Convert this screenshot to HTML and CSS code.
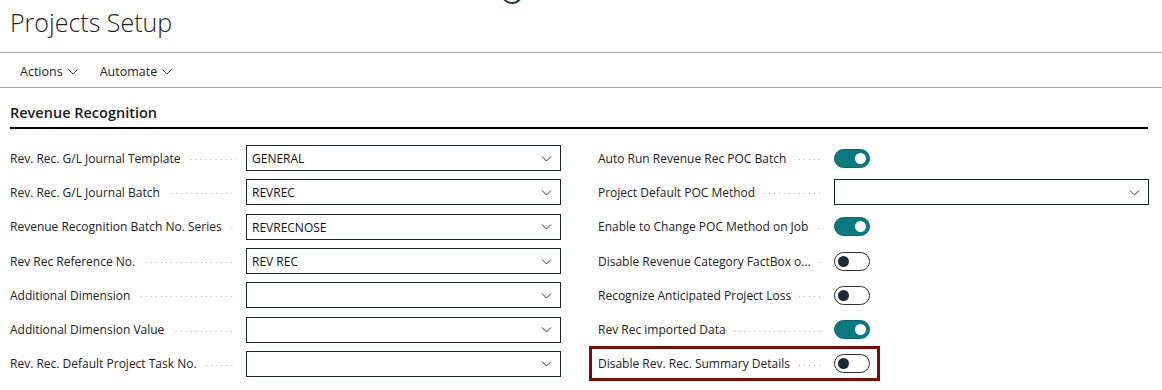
FILE: index.html
```html
<!DOCTYPE html>
<html lang="en">
<head>
  <meta charset="UTF-8" />
  <title>Projects Setup</title>
  <link rel="stylesheet" href="styles.css">
</head>
<body>

  <span class="top-dot"></span>

  <h1 class="page-title">Projects Setup</h1>

  <!-- Barra de acciones -->
  <nav class="action-bar">
    <button class="action-btn">Actions <svg viewBox="0 0 10 6"><path d="M0.5 0.5 L5 5 L9.5 0.5" /></svg></button>
    <button class="action-btn">Automate <svg viewBox="0 0 10 6"><path d="M0.5 0.5 L5 5 L9.5 0.5" /></svg></button>
  </nav>

  <h2 class="section-title">Revenue Recognition</h2>

  <div class="fields">
    <div class="field-col">
      <div class="field-row">
        <span class="label">Rev. Rec. G/L Journal Template<span class="leader"></span></span>
        <div class="select">GENERAL<svg viewBox="0 0 10 6"><path d="M0.5 0.5 L5 5 L9.5 0.5" /></svg></div>
      </div>
      <div class="field-row">
        <span class="label">Rev. Rec. G/L Journal Batch<span class="leader"></span></span>
        <div class="select">REVREC<svg viewBox="0 0 10 6"><path d="M0.5 0.5 L5 5 L9.5 0.5" /></svg></div>
      </div>
      <div class="field-row">
        <span class="label">Revenue Recognition Batch No. Series<span class="leader"></span></span>
        <div class="select">REVRECNOSE<svg viewBox="0 0 10 6"><path d="M0.5 0.5 L5 5 L9.5 0.5" /></svg></div>
      </div>
      <div class="field-row">
        <span class="label">Rev Rec Reference No.<span class="leader"></span></span>
        <div class="select">REV REC<svg viewBox="0 0 10 6"><path d="M0.5 0.5 L5 5 L9.5 0.5" /></svg></div>
      </div>
      <div class="field-row">
        <span class="label">Additional Dimension<span class="leader"></span></span>
        <div class="select"><svg viewBox="0 0 10 6"><path d="M0.5 0.5 L5 5 L9.5 0.5" /></svg></div>
      </div>
      <div class="field-row">
        <span class="label">Additional Dimension Value<span class="leader"></span></span>
        <div class="select"><svg viewBox="0 0 10 6"><path d="M0.5 0.5 L5 5 L9.5 0.5" /></svg></div>
      </div>
      <div class="field-row">
        <span class="label">Rev. Rec. Default Project Task No.<span class="leader"></span></span>
        <div class="select"><svg viewBox="0 0 10 6"><path d="M0.5 0.5 L5 5 L9.5 0.5" /></svg></div>
      </div>
    </div>

    <div class="field-col">
      <div class="field-row">
        <span class="label">Auto Run Revenue Rec POC Batch<span class="leader"></span></span>
        <span class="toggle on"></span>
      </div>
      <div class="field-row">
        <span class="label">Project Default POC Method<span class="leader"></span></span>
        <div class="select"><svg viewBox="0 0 10 6"><path d="M0.5 0.5 L5 5 L9.5 0.5" /></svg></div>
      </div>
      <div class="field-row">
        <span class="label">Enable to Change POC Method on Job<span class="leader"></span></span>
        <span class="toggle on"></span>
      </div>
      <div class="field-row">
        <span class="label">Disable Revenue Category FactBox o...<span class="leader"></span></span>
        <span class="toggle"></span>
      </div>
      <div class="field-row">
        <span class="label">Recognize Anticipated Project Loss<span class="leader"></span></span>
        <span class="toggle"></span>
      </div>
      <div class="field-row">
        <span class="label">Rev Rec imported Data<span class="leader"></span></span>
        <span class="toggle on"></span>
      </div>
      <div class="field-row highlight">
        <span class="label">Disable Rev. Rec. Summary Details<span class="leader"></span></span>
        <span class="toggle"></span>
      </div>
    </div>
  </div>

</body>
</html>
```

FILE: styles.css
```css
body {
  margin: 0;
  font-family: 'Open Sans', 'Noto Sans', sans-serif;
  color: #212121;
  background-color: #fff;
  position: relative;
}

.top-dot {
  position: absolute;
  left: 501px;
  top: -18px;
  width: 18px;
  height: 18px;
  border: 2px solid #1c3a40;
  border-radius: 50%;
}

.page-title {
  margin: 0;
  padding: 5px 0 0 10px;
  height: 47px;
  box-sizing: border-box;
  font-size: 25px;
  font-weight: 300;
  line-height: 34px;
  color: #222;
}

.action-bar {
  display: flex;
  align-items: center;
  gap: 22px;
  height: 34px;
  padding: 3px 0 0 20px;
  box-sizing: border-box;
  height: 36px;
  border-top: 1px solid #a6a6a6;
  border-bottom: 1px solid #a6a6a6;
  margin-top: 5px;
}

.action-btn {
  display: flex;
  align-items: center;
  gap: 5px;
  background: transparent;
  border: none;
  padding: 0;
  font-family: inherit;
  font-size: 12.5px;
  color: #222;
}

.action-btn svg {
  width: 10px;
  height: 6px;
  fill: none;
  stroke: #444;
  stroke-width: 1;
}

.section-title {
  margin: 0 14px 0 10px;
  padding-top: 15px;
  height: 24px;
  font-size: 14.5px;
  font-weight: 600;
  line-height: 20px;
  color: #1a1a1a;
  border-bottom: 2px solid #000;
}

.fields {
  display: grid;
  grid-template-columns: 551px 551px;
  column-gap: 37px;
  padding: 12px 0 0 10px;
}

.field-row {
  display: flex;
  align-items: center;
  height: 34.3px;
}

.label {
  display: flex;
  align-items: center;
  width: 226px;
  margin-right: 10px;
  font-size: 12px;
  white-space: nowrap;
  color: #212121;
}

.leader {
  flex: 1;
  height: 1px;
  margin: 3px 0 0 8px;
  background-image: linear-gradient(to right, #b0b0b0 1px, transparent 1px);
  background-size: 5px 1px;
  background-repeat: repeat-x;
  background-position: right;
}

.select {
  flex: 1;
  display: flex;
  align-items: center;
  justify-content: space-between;
  height: 26px;
  box-sizing: border-box;
  border: 1px solid #1f2428;
  padding: 1px 8px 0 5px;
  font-size: 12px;
  color: #111;
}

.select svg {
  width: 11px;
  height: 6px;
  margin-left: auto;
  fill: none;
  stroke: #333;
  stroke-width: 1;
}

.toggle {
  position: relative;
  width: 36px;
  height: 19px;
  box-sizing: border-box;
  border: 1px solid #2a2f36;
  border-radius: 10px;
  background-color: #fff;
}

.toggle::after {
  content: "";
  position: absolute;
  left: 3px;
  top: 3px;
  width: 11px;
  height: 11px;
  border-radius: 50%;
  background-color: #202833;
}

.toggle.on {
  background-color: #0a7a80;
  border-color: #0a6a70;
}

.toggle.on::after {
  left: auto;
  right: 3px;
  background-color: #fff;
}

.highlight {
  position: relative;
}

.highlight::before {
  content: "";
  position: absolute;
  left: -9px;
  top: -1px;
  width: 285px;
  height: 29px;
  border: 3px solid #7b0b0b;
}
```
